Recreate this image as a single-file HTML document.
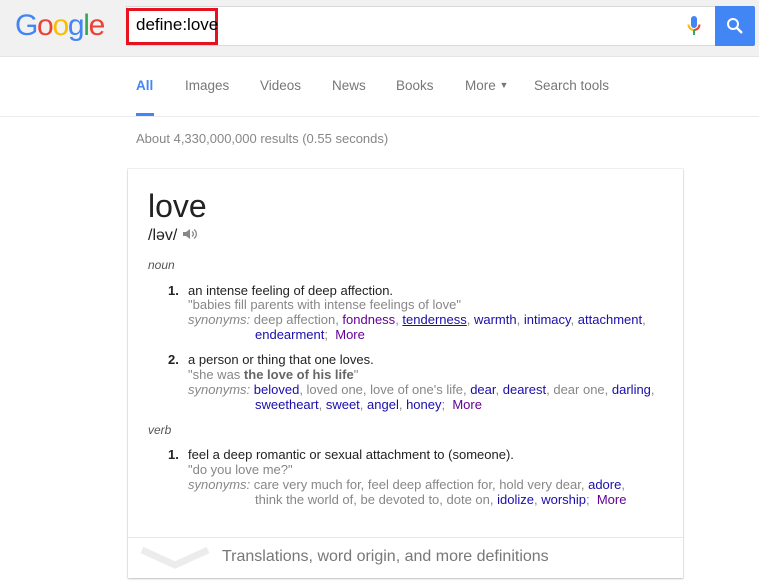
<!DOCTYPE html>
<html><head><meta charset="utf-8"><style>
*{margin:0;padding:0;box-sizing:border-box}
body{width:759px;height:581px;overflow:hidden;background:#fff;font-family:"Liberation Sans",Arial,sans-serif;position:relative}
.hdr{position:absolute;left:0;top:0;width:759px;height:57px;background:#f1f1f1;border-bottom:1px solid #e5e5e5}
.logo{position:absolute;left:15px;top:9px;font-size:30px;letter-spacing:-1.3px;font-family:"Liberation Sans",sans-serif}
.box{position:absolute;left:126px;top:6px;width:590px;height:40px;background:#fff;border:1px solid #d9d9d9}
.red{position:absolute;left:126px;top:8px;width:92px;height:37px;border:3px solid #e8111f}
.q{position:absolute;left:136px;top:15px;font-size:17px;color:#000}
.btn{position:absolute;left:715px;top:6px;width:40px;height:40px;background:#4285f4;border-radius:0 2px 2px 0}
.nav{position:absolute;top:78px;font-size:13.5px;color:#777}
.navline{position:absolute;left:0;top:116px;width:759px;height:1px;background:#ebebeb}
.card{position:absolute;left:128px;top:169px;width:555px;height:409px;background:#fff;box-shadow:0 1px 2px rgba(0,0,0,.2),0 0 0 1px rgba(0,0,0,.05)}
.t{position:absolute;font-size:13px;color:#222;white-space:nowrap}
.g{color:#878787}
.s{color:#878787;font-style:italic}
.l{color:#1a0dab}
.v{color:#660099}
</style></head><body>
<div class="hdr"></div>
<div class="logo"><span style="color:#4285f4">G</span><span style="color:#ea4335">o</span><span style="color:#fbbc05">o</span><span style="color:#4285f4">g</span><span style="color:#34a853">l</span><span style="color:#ea4335">e</span></div>
<div class="box"></div>
<div class="red"></div>
<div class="q">define:love</div>
<svg style="position:absolute;left:686px;top:15px" width="16" height="22" viewBox="0 0 16 22">
<rect x="5" y="1" width="6" height="12" rx="3" fill="#4285f4"/>
<path d="M2.5 9.5 A5.5 5.5 0 0 0 8 15" stroke="#fbbc05" stroke-width="2" fill="none"/>
<path d="M8 15 A5.5 5.5 0 0 0 13.5 9.5" stroke="#ea4335" stroke-width="2" fill="none"/>
<rect x="7" y="15" width="2" height="5" fill="#34a853"/>
</svg>
<div class="btn"><svg style="position:absolute;left:11px;top:11px" width="18" height="18" viewBox="0 0 18 18"><circle cx="7" cy="7" r="5" stroke="#fff" stroke-width="2" fill="none"/><path d="M10.5 10.5 L16 16" stroke="#fff" stroke-width="2.4"/></svg></div>
<div class="nav" style="left:136px;color:#4285f4;font-weight:bold">All</div>
<div style="position:absolute;left:136px;top:113px;width:18px;height:3px;background:#4285f4"></div>
<div class="nav" style="left:185px">Images</div>
<div class="nav" style="left:260px">Videos</div>
<div class="nav" style="left:332px">News</div>
<div class="nav" style="left:396px">Books</div>
<div class="nav" style="left:465px">More <span style="font-size:9px;position:relative;top:-2px">▼</span></div>
<div class="nav" style="left:534px">Search tools</div>
<div class="navline"></div>
<div class="t g" style="left:136px;top:131px">About 4,330,000,000 results (0.55 seconds)</div>
<div class="card"></div>
<div class="t" style="left:148px;top:188px;font-size:32px;color:#222">love</div>
<div class="t" style="left:148px;top:227px;font-size:16px;color:#222">/ləv/ <svg width="16" height="14" viewBox="0 0 16 14" style="vertical-align:-1px"><path d="M1 5h3l4-3v10l-4-3H1z" fill="#888"/><path d="M10 4.5a3 3 0 0 1 0 5M12 2.5a5.5 5.5 0 0 1 0 9" stroke="#888" stroke-width="1.3" fill="none"/></svg></div>
<div class="t s" style="left:148px;top:258px;font-size:12px;color:#555">noun</div>
<div class="t" style="left:168px;top:283px;font-weight:bold">1.</div>
<div class="t" style="left:188px;top:283px">an intense feeling of deep affection.</div>
<div class="t g" style="left:188px;top:297px">"babies fill parents with intense feelings of love"</div>
<div class="t g" style="left:188px;top:312px"><i>synonyms:</i> deep affection, <span class="v">fondness</span>, <span class="l" style="text-decoration:underline">tenderness</span>, <span class="l">warmth</span>, <span class="l">intimacy</span>, <span class="l">attachment</span>,</div>
<div class="t g" style="left:255px;top:327px"><span class="l">endearment</span>; &nbsp;<span class="v">More</span></div>
<div class="t" style="left:168px;top:352px;font-weight:bold">2.</div>
<div class="t" style="left:188px;top:352px">a person or thing that one loves.</div>
<div class="t g" style="left:188px;top:367px">"she was <b style="color:#666">the love of his life</b>"</div>
<div class="t g" style="left:188px;top:382px"><i>synonyms:</i> <span class="l">beloved</span>, loved one, love of one's life, <span class="l">dear</span>, <span class="l">dearest</span>, dear one, <span class="l">darling</span>,</div>
<div class="t g" style="left:255px;top:397px"><span class="l">sweetheart</span>, <span class="l">sweet</span>, <span class="l">angel</span>, <span class="l">honey</span>; &nbsp;<span class="v">More</span></div>
<div class="t s" style="left:148px;top:423px;font-size:12px;color:#555">verb</div>
<div class="t" style="left:168px;top:447px;font-weight:bold">1.</div>
<div class="t" style="left:188px;top:447px">feel a deep romantic or sexual attachment to (someone).</div>
<div class="t g" style="left:188px;top:462px">"do you love me?"</div>
<div class="t g" style="left:188px;top:477px"><i>synonyms:</i> care very much for, feel deep affection for, hold very dear, <span class="l">adore</span>,</div>
<div class="t g" style="left:255px;top:492px">think the world of, be devoted to, dote on, <span class="l">idolize</span>, <span class="l">worship</span>; &nbsp;<span class="v">More</span></div>
<div style="position:absolute;left:128px;top:537px;width:555px;height:1px;background:#e8e8e8"></div>
<svg style="position:absolute;left:140px;top:545px" width="70" height="26" viewBox="0 0 70 26"><path d="M2 5 L35 20 L68 5" stroke="#ececec" stroke-width="7" fill="none"/></svg>
<div class="t" style="left:222px;top:548px;font-size:16px;color:#777">Translations, word origin, and more definitions</div>
</body></html>
